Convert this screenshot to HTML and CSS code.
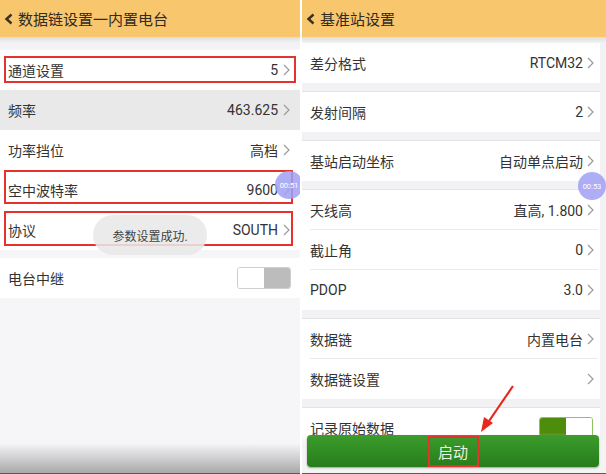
FILE: index.html
```html
<!DOCTYPE html>
<html lang="zh">
<head>
<meta charset="utf-8">
<link rel="stylesheet" href="styles.css">
</head>
<body>
<div class="screen">
  <section class="panel panel-left">
    <header class="bar">
      <svg class="back" width="10" height="12" viewBox="0 0 10 12"><polyline points="7.5,1.5 2.5,6 7.5,10.5" fill="none" stroke="#3a3020" stroke-width="2.4"/></svg>
      <span class="title">数据链设置一内置电台</span>
    </header>
    <div class="shade"></div>
    <div class="group">
      <div class="row mark mark-a"><span class="label">通道设置</span><span class="value">5</span><svg class="chev" width="7" height="12" viewBox="0 0 7 12"><polyline points="1,1 6,6 1,11" fill="none" stroke="#9a9a9a" stroke-width="1.2"/></svg></div>
      <div class="row pressed"><span class="label">频率</span><span class="value">463.625</span><svg class="chev" width="7" height="12" viewBox="0 0 7 12"><polyline points="1,1 6,6 1,11" fill="none" stroke="#9a9a9a" stroke-width="1.2"/></svg></div>
      <div class="row"><span class="label">功率挡位</span><span class="value">高档</span><svg class="chev" width="7" height="12" viewBox="0 0 7 12"><polyline points="1,1 6,6 1,11" fill="none" stroke="#9a9a9a" stroke-width="1.2"/></svg></div>
      <div class="row mark mark-b"><span class="label">空中波特率</span><span class="value">9600</span><svg class="chev" width="7" height="12" viewBox="0 0 7 12"><polyline points="1,1 6,6 1,11" fill="none" stroke="#9a9a9a" stroke-width="1.2"/></svg></div>
      <div class="row mark mark-c"><span class="label">协议</span><span class="value">SOUTH</span><svg class="chev" width="7" height="12" viewBox="0 0 7 12"><polyline points="1,1 6,6 1,11" fill="none" stroke="#9a9a9a" stroke-width="1.2"/></svg></div>
    </div>
    <div class="group group-gap">
      <div class="row"><span class="label">电台中继</span><span class="toggle toggle-off"><span class="knob"></span><span class="track"></span></span></div>
    </div>
    <div class="filler"></div>
    <div class="toast">参数设置成功.</div>
    <div class="bubble bubble-left">00:51</div>
  </section>

  <section class="panel panel-right">
    <header class="bar">
      <svg class="back" width="10" height="12" viewBox="0 0 10 12"><polyline points="7.5,1.5 2.5,6 7.5,10.5" fill="none" stroke="#3a3020" stroke-width="2.4"/></svg>
      <span class="title">基准站设置</span>
    </header>
    <div class="list">
      <div class="group rgroup first">
        <div class="row rrow"><span class="label">差分格式</span><span class="value">RTCM32</span><svg class="chev" width="7" height="12" viewBox="0 0 7 12"><polyline points="1,1 6,6 1,11" fill="none" stroke="#9a9a9a" stroke-width="1.2"/></svg></div>
      </div>
      <div class="group rgroup">
        <div class="row rrow"><span class="label">发射间隔</span><span class="value">2</span><svg class="chev" width="7" height="12" viewBox="0 0 7 12"><polyline points="1,1 6,6 1,11" fill="none" stroke="#9a9a9a" stroke-width="1.2"/></svg></div>
      </div>
      <div class="group rgroup">
        <div class="row rrow"><span class="label">基站启动坐标</span><span class="value">自动单点启动</span><svg class="chev" width="7" height="12" viewBox="0 0 7 12"><polyline points="1,1 6,6 1,11" fill="none" stroke="#9a9a9a" stroke-width="1.2"/></svg></div>
      </div>
      <div class="group rgroup">
        <div class="row rrow sep"><span class="label">天线高</span><span class="value">直高, 1.800</span><svg class="chev" width="7" height="12" viewBox="0 0 7 12"><polyline points="1,1 6,6 1,11" fill="none" stroke="#9a9a9a" stroke-width="1.2"/></svg></div>
        <div class="row rrow sep"><span class="label">截止角</span><span class="value">0</span><svg class="chev" width="7" height="12" viewBox="0 0 7 12"><polyline points="1,1 6,6 1,11" fill="none" stroke="#9a9a9a" stroke-width="1.2"/></svg></div>
        <div class="row rrow"><span class="label">PDOP</span><span class="value">3.0</span><svg class="chev" width="7" height="12" viewBox="0 0 7 12"><polyline points="1,1 6,6 1,11" fill="none" stroke="#9a9a9a" stroke-width="1.2"/></svg></div>
      </div>
      <div class="group rgroup">
        <div class="row rrow sep"><span class="label">数据链</span><span class="value">内置电台</span><svg class="chev" width="7" height="12" viewBox="0 0 7 12"><polyline points="1,1 6,6 1,11" fill="none" stroke="#9a9a9a" stroke-width="1.2"/></svg></div>
        <div class="row rrow"><span class="label">数据链设置</span><span class="value"></span><svg class="chev" width="7" height="12" viewBox="0 0 7 12"><polyline points="1,1 6,6 1,11" fill="none" stroke="#9a9a9a" stroke-width="1.2"/></svg></div>
      </div>
      <div class="group rgroup">
        <div class="row rrow"><span class="label">记录原始数据</span><span class="toggle toggle-on"><span class="track"></span><span class="knob"></span></span></div>
      </div>
    </div>
    <div class="bottom">
      <button class="start"><span class="start-text">启动</span></button>
    </div>
    <div class="bubble bubble-right">00:53</div>
    <svg class="arrow" width="40" height="52" viewBox="0 0 40 52">
      <line x1="36" y1="2" x2="10" y2="40" stroke="#e8261c" stroke-width="2.2"/>
      <polygon points="4,48 7,33 16,39" fill="#e8261c"/>
    </svg>
  </section>
</div>
</body>
</html>
```

FILE: styles.css
```css
* { box-sizing: border-box; }
html, body { margin: 0; padding: 0; }
body {
  width: 606px;
  height: 474px;
  overflow: hidden;
  background: #ffffff;
  font-family: Roboto, "Noto Sans CJK SC", "Noto Sans", sans-serif;
  color: #333333;
}
.screen {
  display: flex;
  gap: 2px;
  height: 474px;
}
.panel {
  position: relative;
  overflow: hidden;
  display: flex;
  flex-direction: column;
  background: #f6f5f8;
  border-bottom: 1px solid #5a5a5a;
}
.panel-left { width: 300px; }
.panel-right { width: 304px; background: #f2f2f4; }

.bar {
  height: 37px;
  flex: none;
  background: #f8c66c;
  display: flex;
  align-items: center;
  padding-left: 4px;
  gap: 4px;
}
.back { flex: none; }
.title {
  font-size: 15px;
  color: #2f2a22;
}
.shade {
  height: 13px;
  flex: none;
  background: linear-gradient(#dcdcdc, #f1f0f3 40%, #f6f5f8);
}
.group { background: #ffffff; flex: none; }
.group-gap { margin-top: 8px; }

.row {
  position: relative;
  height: 40px;
  display: flex;
  align-items: center;
  padding: 0 8px 0 8px;
  font-size: 14px;
  background: #ffffff;
}
.row.pressed { background: #e9e9e9; }
.label { flex: 1; }
.value { margin-right: 5px; color: #333333; }
.chev { flex: none; margin-right: 2px; }

.mark::after {
  content: "";
  position: absolute;
  left: 4px;
  right: 4px;
  border: 2px solid #e5322d;
}
.mark-a::after { top: 6px; bottom: 7px; }
.mark-b::after { top: 0; bottom: 6px; right: 7px; }
.mark-c::after { top: 1px; bottom: 4px; right: 7px; }

.filler {
  flex: 1;
  background: linear-gradient(#f6f5f8 0, #f6f5f8 calc(100% - 30px), #a9a9a9 100%);
}

.toggle {
  display: flex;
  width: 54px;
  height: 22px;
  border-radius: 3px;
  overflow: hidden;
  margin-right: 1px;
}
.toggle-off { border: 1px solid #cfcfcf; }
.toggle-off .knob { flex: 1; background: #ffffff; }
.toggle-off .track { flex: 1; background: #bcbcbc; }
.toggle-on { border: 1px solid #8fc25a; }
.toggle-on .track { flex: 1; background: #4e8d0c; }
.toggle-on .knob { flex: 1; background: #ffffff; }

.toast {
  position: absolute;
  left: 93px;
  top: 215px;
  width: 114px;
  height: 40px;
  border-radius: 20px;
  background: rgba(232, 232, 232, 0.88);
  font-size: 12px;
  color: #444444;
  display: flex;
  align-items: center;
  justify-content: center;
}

.bubble {
  position: absolute;
  width: 28px;
  height: 28px;
  border-radius: 50%;
  background: rgba(160, 160, 245, 0.85);
  color: #ffffff;
  font-size: 7.5px;
  display: flex;
  align-items: center;
  justify-content: center;
}
.bubble-left { left: 275px; top: 171px; }
.bubble-right { left: 276px; top: 172px; }

.list {
  flex: 1;
  display: flex;
  flex-direction: column;
  gap: 8px;
  padding: 6px 6px 0 0;
  background: linear-gradient(#dedede, #f2f2f4 6px) no-repeat;
}
.rgroup { border-top: 1px solid #e3e3e6; }
.rgroup.first { border-top: 0; }
.rrow { padding: 0 4px 0 8px; }
.rrow .value { margin-right: 4px; }
.rrow .toggle { margin-right: 3px; }
.rrow.sep::before {
  content: "";
  position: absolute;
  left: 8px;
  right: 2px;
  bottom: 0;
  height: 1px;
  background: #ebebeb;
}

.bottom {
  position: absolute;
  left: 0;
  right: 0;
  bottom: 0;
  height: 40px;
  padding: 2px 7px 6px 5px;
  background: linear-gradient(rgba(255,255,255,0), #f4f4f4 30%);
}
.start {
  width: 100%;
  height: 32px;
  border: 0;
  border-radius: 4px;
  background: linear-gradient(#3c9c2c, #2f8a22 60%, #287c1c);
  box-shadow: 0 1px 2px rgba(0,0,0,0.35);
  font-family: inherit;
  display: flex;
  align-items: center;
  justify-content: center;
  padding: 0;
}
.start-text {
  font-size: 15px;
  color: #e9f4e2;
  border: 2px solid #e5322d;
  width: 51px;
  height: 31px;
  display: flex;
  align-items: center;
  justify-content: center;
}
.arrow {
  position: absolute;
  left: 175px;
  top: 384px;
}
```
